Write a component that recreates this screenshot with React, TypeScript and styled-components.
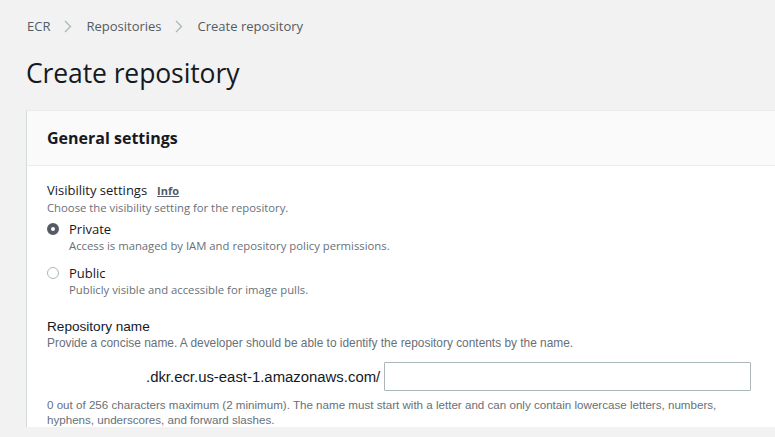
import React from "react";
import styled, { createGlobalStyle } from "styled-components";

const Global = createGlobalStyle`
  html, body { margin: 0; padding: 0; background: #f2f2f2; overflow: hidden; }
  body { font-family: "Open Sans", "Noto Sans", sans-serif; color: #16191f; }
`;

const Page = styled.div`
  width: 820px;
  height: 437px;
  padding: 0 0 0 26px;
  box-sizing: border-box;
`;

const Crumbs = styled.nav`
  display: flex;
  align-items: center;
  height: 20px;
  padding-top: 16px;
  font-size: 13px;
  color: #545b64;
`;

const Crumb = styled.span`
  padding-left: 1px;
  color: #545b64;
`;

const Chevron = styled.span`
  display: inline-flex;
  width: 35px;
  justify-content: center;
  color: #aab7b8;
`;

const Title = styled.h1`
  margin: 0;
  padding-top: 18px;
  height: 38px;
  font-size: 26.5px;
  font-weight: 400;
  line-height: 38px;
  color: #16191f;
  letter-spacing: -0.1px;
`;

const Card = styled.section`
  margin-top: 18px;
  background: #fff;
  border-left: 1px solid #d5dbdb;
  border-top: 1px solid #eaeded;
`;

const CardHeader = styled.header`
  height: 54px;
  display: flex;
  align-items: center;
  padding-left: 20px;
  background: #fafafa;
  border-bottom: 1px solid #eaeded;
`;

const CardTitle = styled.h2`
  margin: 0;
  font-size: 16px;
  font-weight: 700;
  color: #16191f;
`;

const CardBody = styled.div`
  padding: 15px 0 0 20px;
`;

const FieldLabel = styled.div`
  display: flex;
  align-items: baseline;
  gap: 10px;
  font-size: 13px;
  line-height: 18px;
  color: #16191f;
`;

const InfoLink = styled.a`
  font-size: 11px;
  font-weight: 700;
  color: #545b64;
  text-decoration: underline;
`;

const Hint = styled.div`
  font-size: 11.3px;
  line-height: 16px;
  color: #687078;
`;

const RadioList = styled.div`
  display: flex;
  flex-direction: column;
  gap: 10px;
  margin-top: 4px;
`;

const RadioRow = styled.label`
  display: grid;
  grid-template-columns: 22px 1fr;
  align-items: start;
`;

const RadioDot = styled.span<{ $checked?: boolean }>`
  width: 12px;
  height: 12px;
  margin-top: 3px;
  box-sizing: border-box;
  border-radius: 50%;
  background: #fff;
  border: ${(p) => (p.$checked ? "4px solid #545b64" : "1px solid #aab7b8")};
`;

const RadioText = styled.div`
  display: flex;
  flex-direction: column;
`;

const RadioLabel = styled.span`
  font-size: 13px;
  line-height: 18px;
  color: #16191f;
`;

const NameSection = styled.div`
  margin-top: 20px;
  font-family: "Liberation Sans", Arial, sans-serif;
`;

const NameLabel = styled.div`
  font-size: 13.6px;
  line-height: 17px;
  color: #16191f;
`;

const NameHint = styled.div`
  font-size: 11.9px;
  line-height: 17px;
  color: #687078;
`;

const InputRow = styled.div`
  display: flex;
  align-items: center;
  margin-top: 10px;
  padding-left: 99px;
`;

const Prefix = styled.span`
  font-size: 14.9px;
  color: #16191f;
  padding-right: 4px;
`;

const TextInput = styled.input`
  width: 367px;
  height: 29px;
  box-sizing: border-box;
  border: 1px solid #aab7b8;
  border-radius: 1px;
  background: #fff;
  outline: none;
`;

const Constraint = styled.div`
  margin-top: 6px;
  width: 680px;
  font-size: 11.6px;
  line-height: 15px;
  color: #687078;
`;

const ChevronIcon = () => (
  <svg width="8" height="13" viewBox="0 0 8 13" fill="none">
    <path d="M1 1l5.5 5.5L1 12" stroke="#aab7b8" strokeWidth="1.3" />
  </svg>
);

export default function App() {
  return (
    <>
      <Global />
      <Page>
        <Crumbs>
          <Crumb>ECR</Crumb>
          <Chevron>
            <ChevronIcon />
          </Chevron>
          <Crumb>Repositories</Crumb>
          <Chevron>
            <ChevronIcon />
          </Chevron>
          <Crumb>Create repository</Crumb>
        </Crumbs>
        <Title>Create repository</Title>
        <Card>
          <CardHeader>
            <CardTitle>General settings</CardTitle>
          </CardHeader>
          <CardBody>
            <FieldLabel>
              Visibility settings <InfoLink>Info</InfoLink>
            </FieldLabel>
            <Hint>Choose the visibility setting for the repository.</Hint>
            <RadioList>
              <RadioRow>
                <RadioDot $checked />
                <RadioText>
                  <RadioLabel>Private</RadioLabel>
                  <Hint>Access is managed by IAM and repository policy permissions.</Hint>
                </RadioText>
              </RadioRow>
              <RadioRow>
                <RadioDot />
                <RadioText>
                  <RadioLabel>Public</RadioLabel>
                  <Hint>Publicly visible and accessible for image pulls.</Hint>
                </RadioText>
              </RadioRow>
            </RadioList>
            <NameSection>
              <NameLabel>Repository name</NameLabel>
              <NameHint>
                Provide a concise name. A developer should be able to identify the repository contents by the name.
              </NameHint>
              <InputRow>
                <Prefix>.dkr.ecr.us-east-1.amazonaws.com/</Prefix>
                <TextInput />
              </InputRow>
              <Constraint>
                0 out of 256 characters maximum (2 minimum). The name must start with a letter and can only contain
                lowercase letters, numbers, hyphens, underscores, and forward slashes.
              </Constraint>
            </NameSection>
          </CardBody>
        </Card>
      </Page>
    </>
  );
}
